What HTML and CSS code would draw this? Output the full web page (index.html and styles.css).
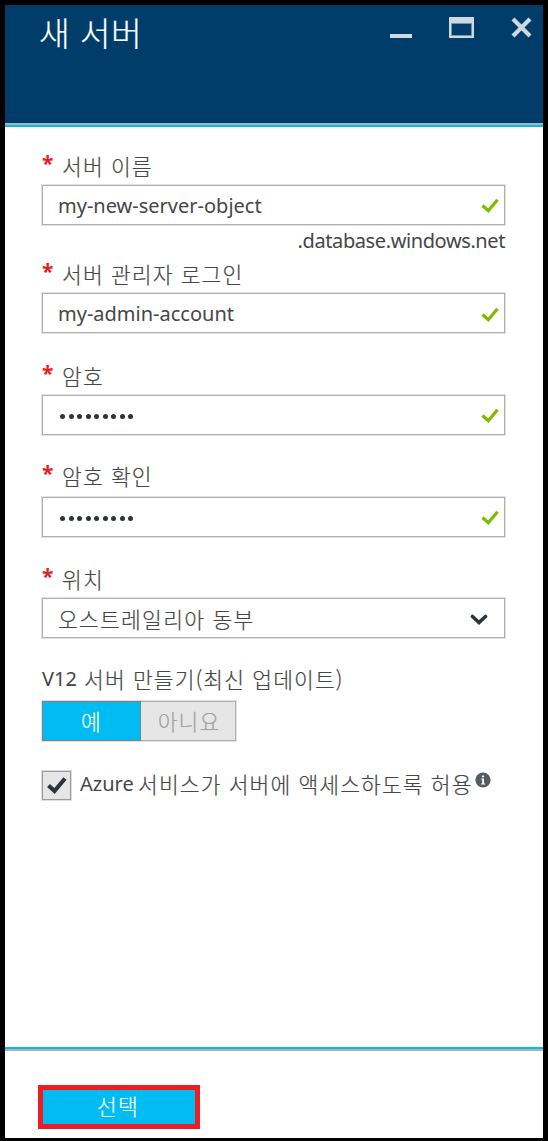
FILE: index.html
```html
<!DOCTYPE html>
<html lang="ko">
<head>
<meta charset="utf-8">
<title>새 서버</title>
<link rel="stylesheet" href="styles.css">
</head>
<body>
<main class="blade">
  <header class="header">
    <h1 class="title">새 서버</h1>
    <div class="window-actions">
      <svg class="icon-min" width="22" height="4" viewBox="0 0 22 4"><path d="M0 0H22V4H0Z" fill="#ced9e2"/></svg>
      <svg class="icon-max" width="25" height="21" viewBox="0 0 25 21"><path d="M0 0H25V21H0Z" fill="#ced9e2"/><path d="M2.5 6.5H22.5V18.5H2.5Z" fill="#003d6b" stroke="#7892aa"/></svg>
      <svg class="icon-close" width="21" height="21" viewBox="0 0 21 21"><path d="M2 2L19 19M19 2L2 19" stroke="#ced9e2" stroke-width="4.2"/></svg>
    </div>
  </header>
  <form class="form">
    <section class="field">
      <div class="label"><span class="star">*</span><span class="ko">서버 이름</span></div>
      <div class="box"><span class="latin value-name">my-new-server-object</span><svg class="check" width="18" height="16" viewBox="0 0 18 16"><path d="M1.5 7.5L7.3 12.7L16.5 1.7" fill="none" stroke="#7fba00" stroke-width="3.3"/></svg></div>
      <div class="hint latin">.database.windows.net</div>
    </section>
    <section class="field after-hint">
      <div class="label"><span class="star">*</span><span class="ko">서버 관리자 로그인</span></div>
      <div class="box"><span class="latin value-admin">my-admin-account</span><svg class="check low" width="18" height="16" viewBox="0 0 18 16"><path d="M1.5 7.5L7.3 12.7L16.5 1.7" fill="none" stroke="#7fba00" stroke-width="3.3"/></svg></div>
    </section>
    <section class="field spaced">
      <div class="label"><span class="star">*</span><span class="ko">암호</span></div>
      <div class="box"><span class="dots"><i></i><i></i><i></i><i></i><i></i><i></i><i></i><i></i><i></i></span><svg class="check" width="18" height="16" viewBox="0 0 18 16"><path d="M1.5 7.5L7.3 12.7L16.5 1.7" fill="none" stroke="#7fba00" stroke-width="3.3"/></svg></div>
    </section>
    <section class="field confirm">
      <div class="label"><span class="star">*</span><span class="ko">암호 확인</span></div>
      <div class="box"><span class="dots"><i></i><i></i><i></i><i></i><i></i><i></i><i></i><i></i><i></i></span><svg class="check" width="18" height="16" viewBox="0 0 18 16"><path d="M1.5 7.5L7.3 12.7L16.5 1.7" fill="none" stroke="#7fba00" stroke-width="3.3"/></svg></div>
    </section>
    <section class="field location">
      <div class="label"><span class="star">*</span><span class="ko">위치</span></div>
      <div class="box"><span class="ko region">오스트레일리아 동부</span><svg class="chevron" width="18" height="12" viewBox="0 0 18 12"><path d="M2.5 2.5L9 8.5L15.5 2.5" fill="none" stroke="#2d343c" stroke-width="3.6" stroke-linecap="round"/></svg></div>
    </section>
    <section class="version">
      <div class="version-label"><span class="latin v12">V12</span><span class="ko">서버 만들기(최신 업데이트)</span></div>
      <div class="toggle"><span class="yes ko">예</span><span class="no ko">아니요</span></div>
    </section>
    <div class="allow">
      <span class="checkbox"><svg width="22" height="20" viewBox="0 0 22 20"><path d="M2.5 9.5L8.5 15L19 2.5" fill="none" stroke="#2d343c" stroke-width="4.2"/></svg></span>
      <span class="latin azure">Azure</span><span class="ko allow-text">서비스가 서버에 액세스하도록 허용</span>
      <svg class="info" width="16" height="16" viewBox="0 0 16 16"><circle cx="8" cy="8" r="7.6" fill="#565b61"/><path d="M6.2 6.5H9V11.5H10.2V12.5H6V11.5H7.2V7.5H6.2ZM7 3.4H9V5.3H7Z" fill="#fff"/></svg>
    </div>
  </form>
  <footer class="footer"><button class="select ko">선택</button></footer>
</main>
</body>
</html>
```
FILE: styles.css
```css
* { box-sizing: border-box; }
body { margin: 0; }
.blade {
  display: flex;
  flex-direction: column;
  width: 548px;
  height: 1141px;
  border: solid #000;
  border-width: 5px 5px 3px;
  background: #fff;
  color: #464646;
}
.ko {
  font-family: "Noto Sans CJK KR", sans-serif;
  font-size: 21.5px;
  font-weight: 300;
  letter-spacing: 1.1px;
  white-space: nowrap;
  -webkit-text-stroke: 0.2px;
}
.latin {
  font-family: "Noto Sans", sans-serif;
  font-size: 20px;
  white-space: nowrap;
}
.header {
  display: flex;
  justify-content: space-between;
  height: 120px;
  padding: 0 11px 0 34px;
  background: #003d6b;
  border-bottom: 2px solid #b2b2b2;
}
.title {
  margin: 4px 0 0;
  font: 300 33.5px/46px "Noto Sans CJK KR", sans-serif;
  color: #fff;
  letter-spacing: 0.3px;
  white-space: nowrap;
  -webkit-text-stroke: 0.2px;
}
.window-actions { display: flex; align-items: flex-start; }
.icon-min { margin: 29px 37px 0 0; }
.icon-max { margin: 12px 37px 0 0; }
.icon-close { margin-top: 12px; }
.form {
  flex: 1;
  border-top: 2px solid #00bcf2;
  padding: 23px 38px 0 37px;
}
.label { display: flex; height: 35px; line-height: 31px; }
.star {
  width: 20px;
  font: 700 21px/27px "Noto Sans", sans-serif;
  color: #e81b25;
}
.box {
  display: flex;
  align-items: center;
  justify-content: space-between;
  height: 40px;
  padding: 0 5px 0 15px;
  border: 1px solid #b0b0b0;
  box-shadow: 0 0 0 1px #e1e1e1;
}
.check { margin-top: 2px; }
.low { margin-top: 4px; }
.hint { height: 33px; line-height: 32px; text-align: right; letter-spacing: -0.4px; }
.spaced { margin-top: 27px; }
.confirm { margin-top: 25px; }
.confirm .label { height: 37px; }
.location { margin-top: 26px; }
.region { letter-spacing: 1.25px; }
.dots { display: flex; gap: 3.5px; padding: 2px 0 0 2px; }
.dots i { width: 5px; height: 5px; border-radius: 50%; background: #2d343c; }
.chevron { margin: 3px 11px 0 0; }
.version { margin-top: 25px; }
.version-label { display: flex; height: 38px; line-height: 32px; }
.v12 { width: 42px; }
.toggle { display: flex; width: 194px; height: 40px; line-height: 38px; text-align: center; box-shadow: 0 0 0 1px #e1e1e1; }
.yes { width: 99px; background: #00bcf2; border: 1px solid #808080; color: #fff; }
.no { flex: 1; padding-left: 2px; background: #e6e6e6; border: 1px solid #b0b0b0; border-left: 0; color: #a0a0a0; }
.allow { display: flex; align-items: flex-start; margin-top: 30px; line-height: 30px; }
.checkbox { display: flex; align-items: center; justify-content: center; width: 29px; height: 29px; border: 1px solid #999; background: #e6e6e6; box-shadow: 0 0 0 1px #ddd; }
.azure { margin-left: 9px; width: 58px; line-height: 26px; }
.allow-text { width: 337px; line-height: 26px; }
.info { margin-top: 1px; }
.footer {
  height: 91px;
  border-top: 2px solid #00bcf2;
  box-shadow: inset 0 2px #b2b2b2;
  padding: 36px 0 0 33px;
}
.select {
  display: block;
  width: 162px;
  height: 44px;
  padding: 0 2px 2px 0;
  border: 5px solid #ee1c25;
  background: #00bcf2;
  color: #fff;
  line-height: 32px;
}
```
